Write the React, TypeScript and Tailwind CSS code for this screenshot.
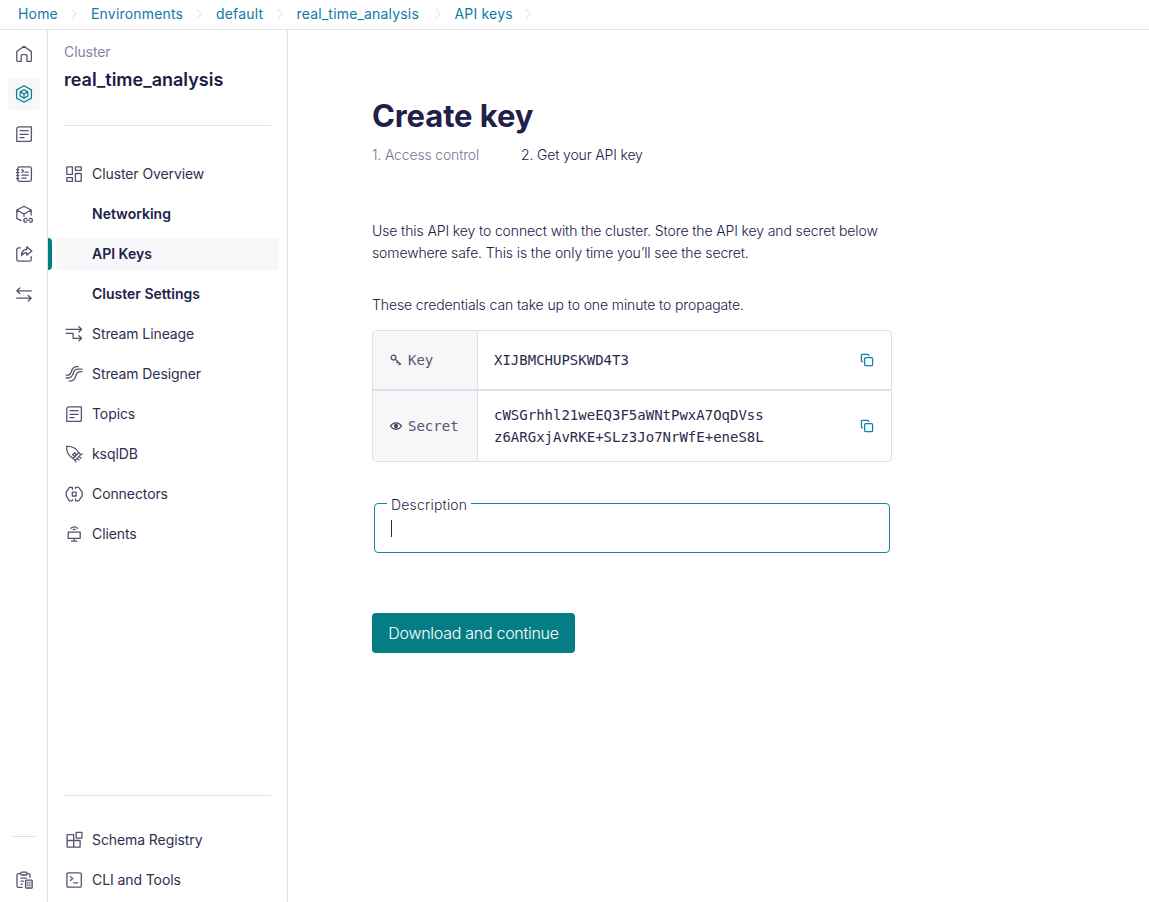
import type { ReactNode } from "react";

type IconProps = { className?: string; children: ReactNode; size?: number };

function Icon({ className = "", children, size = 20 }: IconProps) {
  return (
    <svg
      className={`shrink-0 ${className}`}
      width={size}
      height={size}
      viewBox={`0 0 ${size} ${size}`}
      fill="none"
      stroke="currentColor"
      strokeWidth="1.3"
      strokeLinecap="round"
      strokeLinejoin="round"
    >
      {children}
    </svg>
  );
}

const HomeIcon = () => (
  <Icon>
    <path d="M2.800 7.600 10 2.200l7.400 5.400v8.600a1.200 1.200 0 0 1-1.200 1.200H13v-5.700a1 1 0 0 0-1-1H8.200a1 1 0 0 0-1 1v5.700H4a1.200 1.200 0 0 1-1.200-1.200Z" />
  </Icon>
);

const ClusterIcon = () => (
  <Icon>
    <path d="M10 1.800 17.400 5.900v8.200L10 18.200l-7.400-4.100V5.900Z" />
    <path d="M10 5.800 13.800 7.900v4.200L10 14.200l-3.800-2.100V7.900ZM6.200 7.900 10 10l3.800-2.100M10 10v4.200" />
  </Icon>
);

const TopicsIcon = () => (
  <Icon>
    <path d="M4.600 2.900h12.800v12.500a2 2 0 0 1-2 2H2.800V4.900a2 2 0 0 1 1.800-2ZM6 6.700h8.200M6 10.300h8.200M6 13.700h4" />
  </Icon>
);

const NotebookIcon = () => (
  <Icon>
    <rect x="3.800" y="2.800" width="13.600" height="14.600" rx="1.800" />
    <path d="M2.600 5.800h2.200M2.600 8.700h2.200M2.600 11.600h2.200M2.600 14.500h2.200M7.800 5.600 9.400 7 7.800 8.400M11.200 8.200H14M7.800 11.200h6.400M7.800 14.200h4.400" />
  </Icon>
);

const BoxLinkIcon = () => (
  <Icon>
    <path d="M17.200 11V6L10 2.200 2.800 6v8.400l4.200 2.200M2.800 6l7.200 4 7.200-4M10 10v2.400" />
    <path d="M12.600 14.300h-.9a1.900 1.900 0 0 0 0 3.800h.9M15.600 14.300h.9a1.900 1.900 0 0 1 0 3.800h-.9M12.400 16.200h3.400" />
  </Icon>
);

const ShareIcon = () => (
  <Icon>
    <path d="M6.400 3.800H4.500a1.700 1.700 0 0 0-1.700 1.700v9.900a1.800 1.800 0 0 0 1.800 1.800h10.800a1.800 1.800 0 0 0 1.800-1.800v-2.800" />
    <path d="M7.600 11.600c0-4.300 2-6.100 5.200-6.100V2.800l5 4.200-5 4.200V8.700c-2.400 0-3.900.7-5.200 2.900Z" />
  </Icon>
);

const ArrowsIcon = () => (
  <Icon>
    <path d="M17.400 6.800H2.800M5.800 4 2.800 6.800l3 2.800M2.800 14.200h14.400M14.200 11.400l3 2.800-3 2.800" />
  </Icon>
);

const ClipboardIcon = () => (
  <Icon>
    <path d="M6.400 3.600H4.400a1.400 1.400 0 0 0-1.400 1.400v11a1.400 1.400 0 0 0 1.400 1.400h3.800M13.200 3.600h1.400A1.400 1.400 0 0 1 16 5v2.200" />
    <rect x="6.800" y="2.200" width="6.200" height="2.800" rx=".8" />
    <path d="M7 8.200h5.200M7 11.200h2.400M7 14.200h1.200" />
    <rect x="11.600" y="10.200" width="6.600" height="8" rx=".6" fill="currentColor" fillOpacity=".2" />
    <path d="M13.800 12.600v.2M16 12.600v.2M13.800 15v.2M16 15v.2M14.900 17.400v.6" />
  </Icon>
);

const OverviewIcon = () => (
  <Icon>
    <path d="M2.800 2.900h5.600v7.500H2.800ZM11.400 2.900h5.800v3.500h-5.800ZM2.800 13.700h5.600v3.600H2.800ZM11.400 9.500h5.800v7.800h-5.800Z" />
  </Icon>
);

const LineageIcon = () => (
  <Icon>
    <path d="M2.200 5.300h15.200M14.800 2.700l2.800 2.600-2.800 2.600M2.200 9.400h6.900v4.900h8.300M14.800 11.700l2.800 2.600-2.800 2.600" />
  </Icon>
);

const DesignerIcon = () => (
  <Icon>
    <path d="M2.200 11.200h1.200c2.400 0 3.300-1.100 4.200-4.200C8.500 4 10 2.700 13 2.700h1.200" />
    <path d="M2.200 14h1.800c3.400 0 4.500-1.900 5.400-5.100.8-2.800 2-3.700 4.600-3.700H18" />
    <path d="M5.200 17.200c4 0 5.600-1.800 6.500-5.100.9-3.400 1.800-4.400 4.600-4.400H18" />
  </Icon>
);

const RocketIcon = () => (
  <Icon>
    <path d="M2.600 2.400c5.200-.3 9.600 1.400 12.200 6.200l-5.600 5.800C4.400 11.800 2.400 7.500 2.600 2.400Z" />
    <path d="m14.800 8.600 2 2-5.800 5.800-1.800-2M16.800 10.600l1.400-.6M15.200 12.600l1.800 1.600M13.400 14.400l1.600 1.600M11.400 16.200l.4 1.600" />
    <path d="m10.600 8.800 1.900 1.900-1.900 1.900-1.900-1.900Z" />
  </Icon>
);

const ConnectorsIcon = () => (
  <Icon>
    <path d="M8.400 5.400v-2H5.400L2.200 8.200v3.600l3.200 5h2.800l.5-1M11.600 14.800v2h3l3.600-5V8.200l-3.600-4.800h-2.800l-.5 1" />
    <rect x="8.300" y="8.200" width="3.800" height="3.800" />
  </Icon>
);

const ClientsIcon = () => (
  <Icon>
    <path d="M4.200 8.100h12v6.300h-12ZM10.200 14.400v2.800M7.600 17.200h5.200M7 4.300c1.900-1.900 4.500-1.900 6.400 0M9.200 5.600c.6-.6 1.400-.6 2 0" />
  </Icon>
);

const SchemaIcon = () => (
  <Icon>
    <path d="M3.100 4.700h6.600v12.400H3.100ZM3.100 10.500h13v6.600h-13M12.200 2.400h5.700v5.700h-5.700Z" />
  </Icon>
);

const TerminalIcon = () => (
  <Icon>
    <rect x="2.900" y="2.900" width="14.400" height="14.300" rx="1.200" />
    <path d="M6.400 6.800 8.800 8.600 6.400 10.400M9.600 12.800h4" />
  </Icon>
);

const KeyIcon = () => (
  <Icon size={14} className="text-[#57566f]">
    <circle cx="4.500" cy="4.600" r="2.400" />
    <path d="m6.300 6.300 5.300 5M8.800 8.800l-.9 1M10.700 10.600l-.9 1" />
  </Icon>
);

const EyeIcon = () => (
  <Icon size={14} className="text-[#4a4965]">
    <path d="M1.400 7C4.100 2.700 9.900 2.700 12.600 7 9.900 11.300 4.100 11.300 1.400 7Z" />
    <circle cx="7" cy="7" r="1.500" fill="currentColor" />
  </Icon>
);

const CopyIcon = () => (
  <button aria-label="Copy" className="flex text-[#1282ab]">
    <Icon size={14}>
      <rect x="4.600" y="4.600" width="8" height="8" rx="1.200" />
      <path d="M2.500 8.800h-.1A1.100 1.100 0 0 1 1.400 7.700V2.500a1.100 1.100 0 0 1 1.100-1.100h5.200a1.100 1.100 0 0 1 1.100 1.100" />
    </Icon>
  </button>
);

const crumbs = [
  { label: "Home", width: "w-[39px]" },
  { label: "Environments", width: "w-[91px]" },
  { label: "default", width: "w-[46.5px]" },
  { label: "real_time_analysis", width: "w-[124px]" },
  { label: "API keys", width: "w-[56px]" },
];

const rail = [
  { id: "home", icon: <HomeIcon /> },
  { id: "cluster", icon: <ClusterIcon />, active: true },
  { id: "topics", icon: <TopicsIcon /> },
  { id: "notebook", icon: <NotebookIcon /> },
  { id: "box", icon: <BoxLinkIcon /> },
  { id: "share", icon: <ShareIcon /> },
  { id: "arrows", icon: <ArrowsIcon /> },
];

type NavEntry = { label: string; icon?: ReactNode; active?: boolean };

const nav: NavEntry[] = [
  { label: "Cluster Overview", icon: <OverviewIcon /> },
  { label: "Networking" },
  { label: "API Keys", active: true },
  { label: "Cluster Settings" },
  { label: "Stream Lineage", icon: <LineageIcon /> },
  { label: "Stream Designer", icon: <DesignerIcon /> },
  { label: "Topics", icon: <TopicsIcon /> },
  { label: "ksqlDB", icon: <RocketIcon /> },
  { label: "Connectors", icon: <ConnectorsIcon /> },
  { label: "Clients", icon: <ClientsIcon /> },
];

const footerNav: NavEntry[] = [
  { label: "Schema Registry", icon: <SchemaIcon /> },
  { label: "CLI and Tools", icon: <TerminalIcon /> },
];

function NavItem({ label, icon, active }: NavEntry) {
  return (
    <a className="flex h-8">
      <span className={`w-1 rounded-r ${active ? "bg-[#047d85]" : ""}`} />
      <span
        className={`ml-1 mr-2 flex flex-1 items-center rounded pl-2 ${active ? "bg-[#f7f7f9]" : ""}`}
      >
        <span className="flex w-7 text-[#55546f]">{icon}</span>
        <span
          className={
            icon
              ? "whitespace-nowrap text-sm tracking-[-0.09px] text-[#2f2e50]"
              : "whitespace-nowrap text-sm font-semibold text-[#212048]"
          }
        >
          {label}
        </span>
      </span>
    </a>
  );
}

function SecretRow({ icon, label, children }: { icon: ReactNode; label: string; children: ReactNode }) {
  return (
    <>
      <div className="flex w-[105px] shrink-0 items-center gap-[5px] border-r border-[#e0e0e6] bg-[#f7f7fa] pl-4 text-[#55546f]">
        {icon}
        <span>{label}</span>
      </div>
      <div className="flex flex-1 items-center justify-between pl-4 pr-[17px]">
        <div className="leading-[22px]">{children}</div>
        <CopyIcon />
      </div>
    </>
  );
}

export default function App() {
  return (
    <div className="flex h-[902px] w-[1149px] flex-col overflow-hidden bg-white font-['Inter',sans-serif] text-sm text-[#2b2a4c]">
      <header className="flex h-[30px] shrink-0 items-center border-b border-[#e3e3e8] pb-px pl-[18px] text-[#0f7ba3]">
        {crumbs.map((crumb) => (
          <div key={crumb.label} className="flex items-center">
            <a className={`${crumb.width} whitespace-nowrap tracking-[0.18px]`}>{crumb.label}</a>
            <svg
              className="mx-[14px] text-[#dcdce2]"
              width="6"
              height="12"
              viewBox="0 0 6 12"
              fill="none"
              stroke="currentColor"
            >
              <path d="m.5 1 4.800 5-4.800 5" />
            </svg>
          </div>
        ))}
      </header>

      <div className="flex min-h-0 flex-1">
        <aside className="flex w-12 shrink-0 flex-col items-center border-r border-[#e3e3e8] pb-1.5 pt-2 text-[#55546f]">
          <div className="flex flex-col gap-2">
            {rail.map((item) => (
              <a
                key={item.id}
                className={`flex size-8 items-center justify-center rounded ${item.active ? "bg-[#f7f7f9] text-[#0b868d]" : ""}`}
              >
                {item.icon}
              </a>
            ))}
          </div>
          <div className="mt-auto h-px w-[22px] bg-[#dedee8]" />
          <a className="mt-[27px] flex size-8 items-center justify-center">
            <ClipboardIcon />
          </a>
        </aside>

        <nav className="flex w-60 shrink-0 flex-col border-r border-[#e3e3e8] pb-1.5">
          <div className="mx-4 h-24 border-b border-[#e3e3e8] pt-3">
            <div className="leading-5 tracking-[-0.1px] text-[#86859f]">Cluster</div>
            <h2 className="mt-1.5 text-lg font-semibold leading-6 text-[#1c1b44]">
              real_time_analysis
            </h2>
          </div>
          <div className="mt-8 flex flex-col gap-2">
            {nav.map((item) => (
              <NavItem key={item.label} {...item} />
            ))}
          </div>
          <div className="mx-4 mt-auto border-t border-[#e3e3e8]" />
          <div className="mt-7 flex flex-col gap-2">
            {footerNav.map((item) => (
              <NavItem key={item.label} {...item} />
            ))}
          </div>
        </nav>

        <main className="pl-[84px] pt-[66px]">
          <h1 className="text-[31px] font-bold leading-10 tracking-[-0.1px] text-[#212048]">
            Create key
          </h1>
          <div className="mt-[9px] flex gap-[42px] font-light leading-5 tracking-[-0.16px]">
            <span className="text-[#77768f]">1. Access control</span>
            <span className="text-[#212048]">2. Get your API key</span>
          </div>
          <div className="whitespace-nowrap font-light leading-[22px] tracking-[-0.115px] text-[#212048]">
            <p className="mt-[55px]">
              Use this API key to connect with the cluster. Store the API key and secret below
              <br />
              somewhere safe. This is the only time you’ll see the secret.
            </p>
            <p className="mt-[30px]">These credentials can take up to one minute to propagate.</p>
          </div>

          <section className="mt-[14px] w-[520px] overflow-hidden rounded border border-[#e0e0e6] font-['DejaVu_Sans_Mono',monospace]">
            <div className="flex h-[60px] border-b-2 border-[#e0e0e8]">
              <SecretRow icon={<KeyIcon />} label="Key">
                XIJBMCHUPSKWD4T3
              </SecretRow>
            </div>
            <div className="flex h-[70px]">
              <SecretRow icon={<EyeIcon />} label="Secret">
                cWSGrhhl21weEQ3F5aWNtPwxA7OqDVss
                <br />
                z6ARGxjAvRKE+SLz3Jo7NrWfE+eneS8L
              </SecretRow>
            </div>
          </section>

          <fieldset className="ml-0.5 mt-[31px] h-[60px] w-[516px] rounded border border-[#1282ab] px-3">
            <legend className="h-5 px-1 font-light leading-6 tracking-[0.2px] text-[#2b2a4c]">
              Description
            </legend>
            <div className="ml-1 mt-[7px] h-[17px] w-px bg-[#2b2a4c]" />
          </fieldset>

          <button className="mt-[60px] h-10 w-[203px] whitespace-nowrap rounded bg-[#047d85] text-base font-light tracking-[-0.28px] text-white">
            Download and continue
          </button>
        </main>
      </div>
    </div>
  );
}
